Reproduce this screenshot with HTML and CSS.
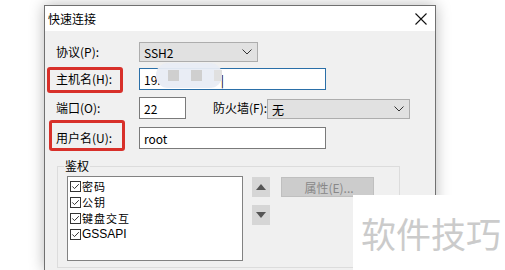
FILE: index.html
```html
<!DOCTYPE html>
<html lang="zh-CN">
<head>
  <meta charset="UTF-8" />
  <title>快速连接</title>
  <link rel="stylesheet" href="styles.css">
</head>
<body>
  <!-- Dialog window -->
  <div class="window">
    <div class="titlebar">
      <span class="title">快速连接</span>
      <svg class="close" width="12" height="12" viewBox="0 0 12 12">
        <path d="M0.5 0.5 L11.5 11.5 M11.5 0.5 L0.5 11.5" stroke="#111" stroke-width="1.1" fill="none"/>
      </svg>
    </div>

    <div class="content">
      <div class="row r1">
        <label class="lbl">协议(P):</label>
        <div class="select sel-proto">
          <span>SSH2</span>
          <svg width="10" height="6" viewBox="0 0 10 6"><path d="M0.5 0.5 L5 5 L9.5 0.5" stroke="#333" fill="none"/></svg>
        </div>
      </div>

      <div class="row r2">
        <label class="lbl mark">主机名(H):</label>
        <div class="input host">
          <span>19.</span>
          <span class="smudge"><i></i><i></i><i class="faint"></i></span>
          <span class="tail">|</span>
        </div>
      </div>

      <div class="row r3">
        <label class="lbl">端口(O):</label>
        <div class="input port">22</div>
        <label class="lbl fw">防火墙(F):</label>
        <div class="select sel-fw">
          <span>无</span>
          <svg width="10" height="6" viewBox="0 0 10 6"><path d="M0.5 0.5 L5 5 L9.5 0.5" stroke="#333" fill="none"/></svg>
        </div>
      </div>

      <div class="row r4">
        <label class="lbl mark mark-user">用户名(U):</label>
        <div class="input user">root</div>
      </div>

      <!-- Auth group -->
      <fieldset class="auth">
        <legend>鉴权</legend>
        <div class="auth-body">
          <ul class="methods">
            <li><svg width="11" height="11" viewBox="0 0 11 11"><rect x="0.5" y="0.5" width="10" height="10" fill="#fff" stroke="#333"/><path d="M2.3 5.4 L4.5 7.6 L8.8 3.2" stroke="#333" fill="none"/></svg><span>密码</span></li>
            <li><svg width="11" height="11" viewBox="0 0 11 11"><rect x="0.5" y="0.5" width="10" height="10" fill="#fff" stroke="#333"/><path d="M2.3 5.4 L4.5 7.6 L8.8 3.2" stroke="#333" fill="none"/></svg><span>公钥</span></li>
            <li><svg width="11" height="11" viewBox="0 0 11 11"><rect x="0.5" y="0.5" width="10" height="10" fill="#fff" stroke="#333"/><path d="M2.3 5.4 L4.5 7.6 L8.8 3.2" stroke="#333" fill="none"/></svg><span>键盘交互</span></li>
            <li><svg width="11" height="11" viewBox="0 0 11 11"><rect x="0.5" y="0.5" width="10" height="10" fill="#fff" stroke="#333"/><path d="M2.3 5.4 L4.5 7.6 L8.8 3.2" stroke="#333" fill="none"/></svg><span class="latin">GSSAPI</span></li>
          </ul>
          <div class="arrows">
            <div class="arrow-btn"><svg width="10" height="6" viewBox="0 0 10 6"><path d="M0 6 L5 0 L10 6 Z" fill="#555"/></svg></div>
            <div class="arrow-btn"><svg width="10" height="6" viewBox="0 0 10 6"><path d="M0 0 L10 0 L5 6 Z" fill="#555"/></svg></div>
          </div>
          <div class="props">属性(E)...</div>
        </div>
      </fieldset>
    </div>
  </div>

  <!-- Watermark over the corner -->
  <div class="watermark">软件技巧</div>
</body>
</html>
```

FILE: styles.css
```css
/* Base */
body {
  margin: 0;
  height: 270px;
  overflow: hidden;
  background: #fff;
  font-family: "Noto Sans CJK SC", "Liberation Sans", sans-serif;
  font-size: 12px;
  color: #000;
}

/* Dialog window (runs off the bottom of the shot) */
.window {
  margin: 5px 0 0 44px;
  width: 390px;
  height: 264px;
  border: 1px solid #707070;
  border-bottom: none;
  background: #f0f0f0;
  box-shadow: 0 0 14px rgba(0, 0, 0, 0.28);
}

.titlebar {
  height: 25px;
  background: #fff;
  display: flex;
  align-items: center;
  justify-content: space-between;
  padding: 0 8px 0 3px;
}
.title {
  line-height: 14px;
}

.content {
  padding: 11px 0 0 11px;
}

/* Form rows */
.row {
  display: flex;
  align-items: center;
  height: 22px;
}
.r1 { height: 20px; }
.r2 { margin-top: 6px; }
.r3 { margin-top: 7px; }
.r4 { margin-top: 8px; }

.lbl {
  width: 83px;
  flex: none;
  line-height: 14px;
  position: relative;
}
.lbl.fw {
  width: auto;
  margin-left: 27px;
}

/* red annotation boxes */
.mark::after {
  content: "";
  position: absolute;
  left: -9px;
  top: -5px;
  width: 70px;
  height: 20px;
  border: 3px solid #d8302a;
  border-radius: 3px;
}
.mark-user::after {
  left: -7px;
  top: -11px;
  height: 25px;
}

.select {
  box-sizing: border-box;
  height: 20px;
  background: #e1e1e1;
  border: 1px solid #adadad;
  display: flex;
  align-items: center;
  justify-content: space-between;
  padding: 0 5px 0 4px;
}
.sel-proto { width: 119px; }
.sel-fw { width: 143px; margin-top: 2px; }

.input {
  box-sizing: border-box;
  height: 22px;
  background: #fff;
  border: 1px solid #7a7a7a;
  display: flex;
  align-items: center;
  padding-left: 4px;
}
.host { width: 187px; border-color: #2a6fa8; position: relative; }
.port { width: 47px; }
.user { width: 187px; }

/* blurred part of the host name */
.smudge {
  position: absolute;
  left: 16px;
  top: -6px;
  width: 66px;
  height: 25px;
  border-radius: 12px;
  background: rgba(232, 236, 244, 0.95);
  display: flex;
  align-items: center;
  gap: 12px;
  padding-left: 12px;
  box-sizing: border-box;
  filter: blur(0.6px);
}
.smudge i {
  width: 11px;
  height: 11px;
  background: #cfcfcf;
}
.smudge i.faint {
  width: 8px;
  background: #e0e0e0;
}
.tail {
  margin-left: 60px;
}

/* Auth group */
.auth {
  margin: 9px 0 0 1px;
  width: 343px;
  box-sizing: border-box;
  border: 1px solid #dcdcdc;
  padding: 2px 9px 6px 9px;
}
.auth legend {
  margin-left: -3px;
  padding: 0 1px;
  line-height: 16px;
}

.auth-body {
  display: flex;
  align-items: flex-start;
}

.methods {
  list-style: none;
  margin: 0;
  padding: 1px 2px;
  width: 176px;
  height: 85px;
  box-sizing: border-box;
  background: #fff;
  border: 1px solid #828282;
}
.methods li {
  height: 16px;
  display: flex;
  align-items: center;
  gap: 1px;
}
.methods li span {
  font-size: 11px;
  line-height: 15px;
  letter-spacing: 1px;
}
.methods li span.latin {
  font-family: "Liberation Sans", sans-serif;
  font-size: 12px;
  letter-spacing: 0;
}

.arrows {
  margin: 1px 0 0 9px;
  display: flex;
  flex-direction: column;
  gap: 8px;
}
.arrow-btn {
  width: 18px;
  height: 20px;
  background: #d6d6d6;
  display: flex;
  align-items: center;
  justify-content: center;
}

.props {
  margin: 1px 0 0 11px;
  width: 93px;
  height: 20px;
  box-sizing: border-box;
  background: #cccccc;
  border: 1px solid #bfbfbf;
  color: #888;
  display: flex;
  align-items: center;
  justify-content: center;
  padding-left: 3px;
}

/* Watermark */
.watermark {
  position: absolute;
  left: 353px;
  top: 195px;
  width: 152px;
  height: 75px;
  background: #fff;
  color: #cbcbcb;
  font-size: 35px;
  line-height: 75px;
  padding-left: 8px;
  box-sizing: border-box;
  white-space: nowrap;
}
```
